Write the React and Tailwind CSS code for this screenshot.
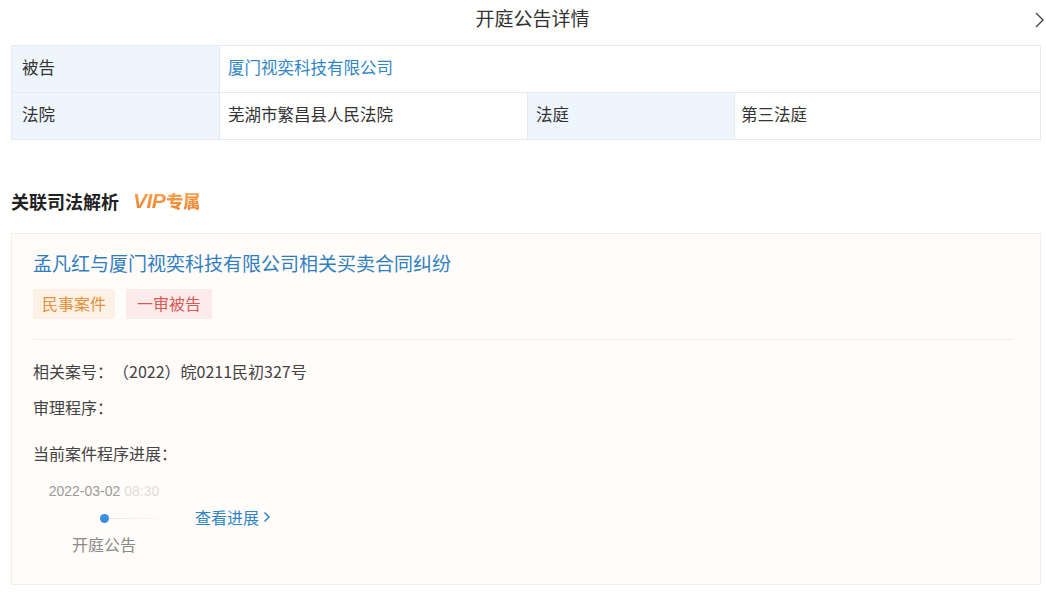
import React from "react";

const font = { fontFamily: '"Noto Sans CJK SC", "Noto Sans", sans-serif' };

export default function App() {
  return (
    <div className="w-[1046px] h-[603px] bg-white overflow-hidden pl-[11px] pr-[5px] [text-spacing-trim:space-all]" style={font}>
      {/* Title bar */}
      <div className="h-[45px] flex items-center">
        <div className="flex-1 text-center pl-[20px] text-[19px] leading-[24px] text-[#333] -mt-[9px]">开庭公告详情</div>
        <div className="w-[12px] -mr-[5px] -mt-[6px] flex items-center">
          <svg width="11" height="18" viewBox="0 0 11 18" fill="none">
            <path d="M2 2 L9 9 L2 16" stroke="#444" strokeWidth="1.4" />
          </svg>
        </div>
      </div>

      {/* Info table */}
      <div className="grid grid-cols-[207px_308px_207px_1fr] border border-[#e4eaf0] text-[16.5px] leading-[24px] text-[#333]">
        <div className="h-[47px] flex items-center pl-[10px] pb-[4px] bg-[#eef5fc] border-b border-[#e4eaf0]">被告</div>
        <div className="col-span-3 h-[47px] flex items-center pl-[8px] pb-[4px] border-b border-l border-[#e4eaf0] text-[#2f86c6]">厦门视奕科技有限公司</div>
        <div className="h-[46px] flex items-center pl-[10px] pb-[4px] bg-[#eef5fc]">法院</div>
        <div className="h-[46px] flex items-center pl-[8px] pb-[4px] border-l border-[#e4eaf0]">芜湖市繁昌县人民法院</div>
        <div className="h-[46px] flex items-center pl-[8px] pb-[4px] bg-[#eef5fc] border-l border-[#e4eaf0]">法庭</div>
        <div className="h-[46px] flex items-center pl-[6px] pb-[4px] border-l border-[#e4eaf0]">第三法庭</div>
      </div>

      {/* Section heading */}
      <div className="mt-[48px] h-[26px] flex items-center gap-[14px]">
        <span className="text-[18px] font-bold text-[#222] leading-[26px]">关联司法解析</span>
        <span className="font-black leading-[26px] bg-gradient-to-b from-[#f7a850] to-[#ec7d2e] bg-clip-text text-transparent flex items-baseline">
          <span className="italic text-[21px] tracking-[-0.5px] pr-[1px]" style={{ fontFamily: '"Liberation Sans", sans-serif' }}>VIP</span>
          <span className="text-[17px]">专属</span>
        </span>
      </div>

      {/* Card */}
      <div className="mt-[19px] h-[352px] border border-[#eeefea] bg-[#fffcf9] pl-[21px] pr-[27px] pt-[17px]">
        <div className="text-[19px] leading-[24px] text-[#2f7fc0]">孟凡红与厦门视奕科技有限公司相关买卖合同纠纷</div>
        <div className="mt-[14px] flex gap-[11px]">
          <span className="h-[30px] px-[9px] pb-[2px] flex items-center bg-[#fdf1e6] text-[#e4913f] text-[16px]">民事案件</span>
          <span className="h-[30px] px-[11px] pb-[2px] flex items-center bg-[#fcebeb] text-[#d95a55] text-[16px]">一审被告</span>
        </div>
        <div className="mt-[20px] h-px bg-[#f3ede8]" />
        <div className="mt-[19px] text-[16px] leading-[24px] text-[#444]">相关案号：（2022）皖0211民初327号</div>
        <div className="mt-[12px] text-[16px] leading-[24px] text-[#444]">审理程序：</div>
        <div className="mt-[22px] text-[16px] leading-[24px] text-[#444]">当前案件程序进展：</div>

        <div className="mt-[15px] flex items-start">
          <div className="ml-[14px] w-[114px] flex flex-col items-center">
            <div className="h-[22px] text-[14px] leading-[22px] whitespace-nowrap" style={{ fontFamily: '"Liberation Sans", sans-serif' }}>
              <span className="text-[#9a9a9a]">2022-03-02 </span>
              <span className="text-[#dcdcdc]">08:30</span>
            </div>
            <div className="mt-[4px] h-[24px] w-full flex items-center">
              <div className="w-[53px]" />
              <div className="w-[9px] h-[9px] rounded-full bg-[#3b8fe0]" />
              <div className="flex-1 h-px bg-gradient-to-r from-[#e8e8e8] to-[#f8f8f8]" />
            </div>
            <div className="mt-[2px] text-[16px] leading-[24px] text-[#8a8a8a]">开庭公告</div>
          </div>
          <div className="ml-[34px] mt-[25px] h-[24px] flex items-center gap-[4px] text-[16px] text-[#2f86c6]">
            <span>查看进展</span>
            <svg width="8" height="12" viewBox="0 0 8 12" fill="none">
              <path d="M1.5 1.5 L6 6 L1.5 10.5" stroke="#2f86c6" strokeWidth="1.5" />
            </svg>
          </div>
        </div>
      </div>
    </div>
  );
}
